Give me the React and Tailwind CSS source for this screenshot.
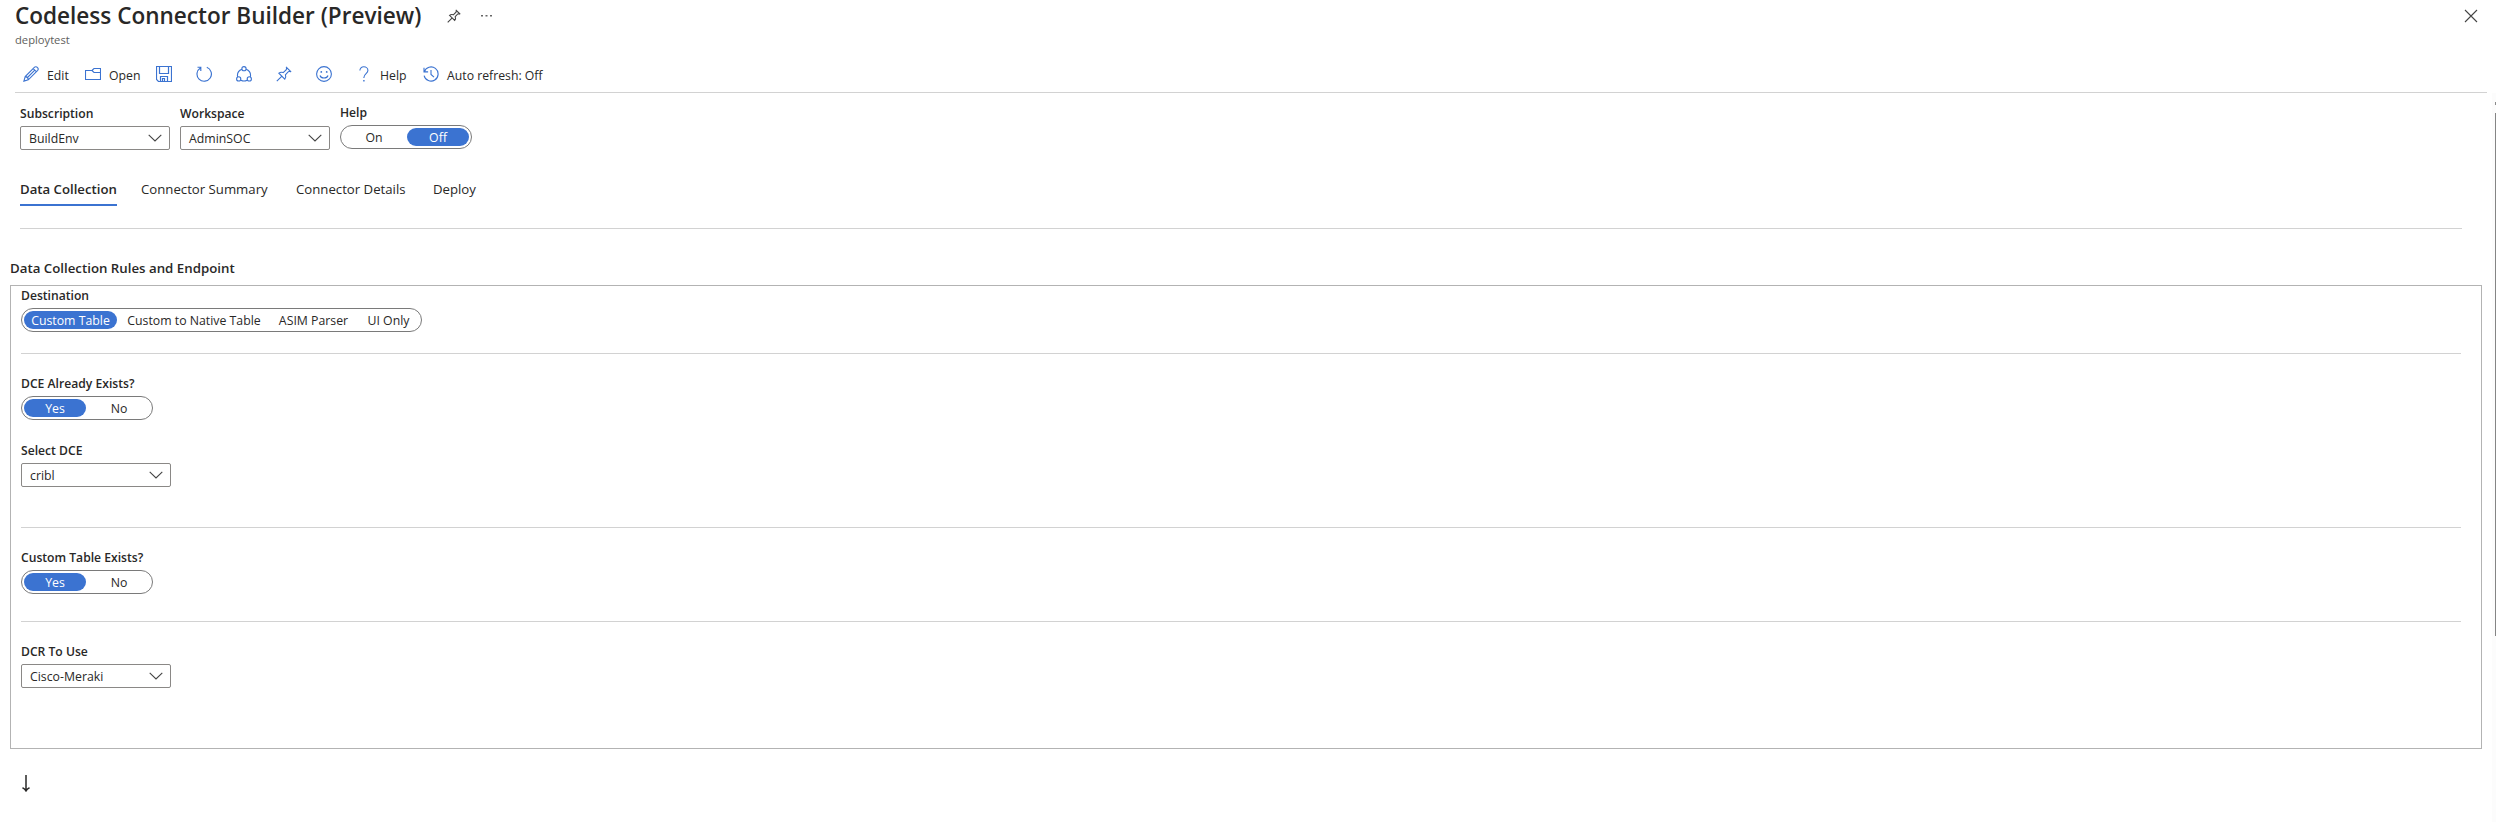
import React from "react";

const Icon = ({ children, className = "" }) => (
  <svg
    viewBox="0 0 16 16"
    className={`h-4 w-4 shrink-0 ${className}`}
    fill="none"
    stroke="currentColor"
    strokeWidth="1.1"
  >
    {children}
  </svg>
);

const PinPath = () => (
  <path d="M10 0.9 15.1 6M10.7 1.6 10.3 3.7 7.2 6.6C5.8 6 4.1 6.2 2.9 7.2L8.8 13.1C9.8 11.9 10 10.2 9.4 8.8L12.3 5.7 14.4 5.3M5.7 10.3 0.8 15.2" />
);

const Select = ({ value }) => (
  <div className="flex h-6 w-[150px] items-center justify-between rounded-[2px] border border-[#8a8886] pr-[7px] pl-2 text-[12.3px] leading-4">
    <span className="pt-0.5">{value}</span>
    <svg viewBox="0 0 14 8" className="h-2 w-3.5" fill="none" stroke="#444" strokeWidth="1.1">
      <path d="M0.7 0.8 7 7 13.3 0.8" />
    </svg>
  </div>
);

const Label = ({ children }) => (
  <div className="h-4 pt-px text-[12.15px] leading-4 font-semibold whitespace-nowrap">{children}</div>
);

const Toggle = ({ options, active }) => (
  <div className="flex h-6 w-[132px] items-center rounded-full border border-[#7a7a7a] px-0.5 text-[12.3px]">
    {options.map((o) => (
      <span
        key={o}
        className={`h-[18px] w-[62px] rounded-full pt-px text-center leading-[18px] ${
          o === active ? "bg-[#3b73d1] text-white" : ""
        } ${o === options[1] ? "ml-0.5" : ""}`}
      >
        {o}
      </span>
    ))}
  </div>
);

const Rule = () => <div className="h-px w-[2440px] bg-[#d2d2d2]" />;

export default function App() {
  return (
    <div className="flex h-[822px] w-[2496px] flex-col overflow-hidden bg-white font-['Open_Sans',sans-serif] text-[#292827]">
      <header className="flex h-[51px] justify-between pl-[15px]">
        <div>
          <div className="flex h-[31px] items-center">
            <h1 className="w-[432px] text-[22.55px] leading-[31px] font-semibold whitespace-nowrap">
              Codeless Connector Builder (Preview)
            </h1>
            <svg viewBox="0 0 16 16" className="h-3.5 w-3.5 text-[#444]" fill="none" stroke="currentColor" strokeWidth="1.25">
              <PinPath />
            </svg>
            <svg viewBox="0 0 12 2" className="ml-5 h-0.5 w-3" fill="#666">
              <rect x="0" y="0" width="2" height="1.5" />
              <rect x="4.5" y="0" width="2" height="1.5" />
              <rect x="9" y="0" width="2" height="1.5" />
            </svg>
          </div>
          <div className="h-4 pt-px text-[11.2px] leading-4 text-[#605e5c]">deploytest</div>
        </div>
        <svg viewBox="0 0 14 14" className="mt-[9px] mr-[18px] h-3.5 w-3.5" fill="none" stroke="#444" strokeWidth="1.1">
          <path d="M1 1 13 13M13 1 1 13" />
        </svg>
      </header>

      <nav className="ml-[15px] flex h-[42px] w-[2472px] border-b border-[#d2d2d2] pt-[15px] pl-2 text-[12.25px] leading-4 text-[#3b73d1]">
        <div className="flex w-[62px]">
          <Icon>
            <path d="M0.9 15.1 2.2 10.6 11.6 1.2C12.3 0.5 13.5 0.5 14.3 1.4 15.4 2.4 15.3 3.6 14.7 4.3L5.3 13.8ZM10.2 2.6 13.3 5.7M2.2 10.6C3.7 10.7 5.2 12.2 5.3 13.8M4 12 11.8 4.2" />
          </Icon>
          <span className="ml-2 pt-0.5 text-[#292827]">Edit</span>
        </div>
        <div className="flex w-[71px]">
          <Icon>
            <path d="M0.5 4.5H7L9 2.5H15.5V13.5H0.5ZM15.5 6.5H9L7 4.5" />
          </Icon>
          <span className="ml-2 pt-0.5 text-[#292827]">Open</span>
        </div>
        <Icon className="mr-6">
          <path d="M0.5 0.5H15.5V15.5H2.5L0.5 13.5ZM3.5 0.5V7.5H12.5V0.5M4.5 15.5V10.5H11.5V15.5M6.5 15.5V12.5H8.5V15.5" strokeWidth="1.2" />
        </Icon>
        <Icon className="mr-6">
          <path d="M10.8 1.3A7.2 7.2 0 1 1 4.4 1.9M1.5 1.2H4.8V4.9" strokeWidth="1.15" />
        </Icon>
        <Icon className="mr-6">
          <circle cx="8" cy="2.7" r="2.1" />
          <circle cx="2.7" cy="12.9" r="2.1" />
          <circle cx="13.3" cy="12.9" r="2.1" />
          <path d="M5.9 3.3A6.9 6.9 0 0 0 1.6 10.9M10.1 3.3A6.9 6.9 0 0 1 14.4 10.9M4.9 14.2A6.9 6.9 0 0 0 11.1 14.2" />
        </Icon>
        <Icon className="mr-6">
          <PinPath />
        </Icon>
        <Icon className="mr-6">
          <circle cx="8" cy="8" r="7.4" />
          <path d="M4 9.5C5 12.8 11 12.8 12 9.5" />
          <circle cx="5.3" cy="5.9" r="0.9" fill="currentColor" stroke="none" />
          <circle cx="10.7" cy="5.9" r="0.9" fill="currentColor" stroke="none" />
        </Icon>
        <div className="flex w-[67px]">
          <Icon>
            <path d="M3.9 4.6C3.9 2.3 5.5 0.8 7.8 0.8S11.9 2.3 11.9 4.4C11.9 7.4 7.9 7.8 7.9 11.5V12" />
            <path d="M7.9 14V15.6" strokeWidth="1.4" />
          </Icon>
          <span className="ml-2 pt-0.5 text-[#292827]">Help</span>
        </div>
        <Icon>
          <path d="M1.3 5.7A7.1 7.1 0 1 1 1.1 9.6M1 1.8V5.9H5.1M8 4V8.5L11 11.2" />
        </Icon>
        <span className="ml-2 pt-0.5 whitespace-nowrap text-[#292827]">Auto refresh: Off</span>
      </nav>

      <div className="flex h-[729px] justify-between">
        <main>
          <div className="flex h-[57px] gap-2.5 pl-5">
            <div className="flex flex-col gap-[5px] pt-3">
              <Label>Subscription</Label>
              <Select value="BuildEnv" />
            </div>
            <div className="flex flex-col gap-[5px] pt-3">
              <Label>Workspace</Label>
              <Select value="AdminSOC" />
            </div>
            <div className="flex flex-col gap-[5px] pt-[11px]">
              <Label>Help</Label>
              <Toggle options={["On", "Off"]} active="Off" />
            </div>
          </div>

          <div className="ml-5 flex h-[79px] w-[2442px] border-b border-[#d2d2d2] pt-[30px] text-[13.2px] leading-[18px] whitespace-nowrap">
            <div className="mr-6 h-[26px] w-[97px] border-b-2 border-[#3b73d1] font-semibold">Data Collection</div>
            <div className="w-[155px]">Connector Summary</div>
            <div className="w-[137px]">Connector Details</div>
            <div>Deploy</div>
          </div>

          <div className="ml-2.5">
            <h2 className="h-[56px] pt-[30px] text-[13.27px] leading-[18px] font-semibold whitespace-nowrap">
              Data Collection Rules and Endpoint
            </h2>
            <section className="h-[464px] w-[2472px] border border-[#b3b3b3] pt-px pl-2.5">
              <Label>Destination</Label>
              <div className="mt-[5px] mb-[21px] flex h-6 w-[401px] items-center rounded-full border border-[#7a7a7a] pl-0.5 text-[12.3px] leading-[18px] whitespace-nowrap">
                <span className="h-[18px] w-[93px] rounded-full bg-[#3b73d1] pt-px text-center text-white">Custom Table</span>
                <span className="h-[18px] w-[154px] pt-px text-center">Custom to Native Table</span>
                <span className="h-[18px] w-[85px] pt-px text-center">ASIM Parser</span>
                <span className="h-[18px] w-[65px] pt-px text-center">UI Only</span>
              </div>
              <Rule />
              <div className="mt-[21px] flex flex-col gap-[5px]">
                <Label>DCE Already Exists?</Label>
                <Toggle options={["Yes", "No"]} active="Yes" />
              </div>
              <div className="mt-[22px] mb-10 flex flex-col gap-[5px]">
                <Label>Select DCE</Label>
                <Select value="cribl" />
              </div>
              <Rule />
              <div className="mt-[21px] mb-[27px] flex flex-col gap-[5px]">
                <Label>Custom Table Exists?</Label>
                <Toggle options={["Yes", "No"]} active="Yes" />
              </div>
              <Rule />
              <div className="mt-[21px] flex flex-col gap-[5px]">
                <Label>DCR To Use</Label>
                <Select value="Cisco-Meraki" />
              </div>
            </section>
            <svg viewBox="0 0 8 17" className="mt-[26px] ml-3 h-[17px] w-2" fill="none" stroke="#292827" strokeWidth="1.5">
              <path d="M4 0V15.5M0.5 12.7Q2.7 13.6 4 15.9Q5.3 13.6 7.5 12.7" />
            </svg>
          </div>
        </main>
        <div className="flex w-1 flex-col items-end bg-[#fcfcfc] pt-[9px]">
          <div className="mb-2 h-[3px] w-px bg-[#8a8a8a]" />
          <div className="h-[523px] w-px bg-[#858585]" />
        </div>
      </div>
    </div>
  );
}
